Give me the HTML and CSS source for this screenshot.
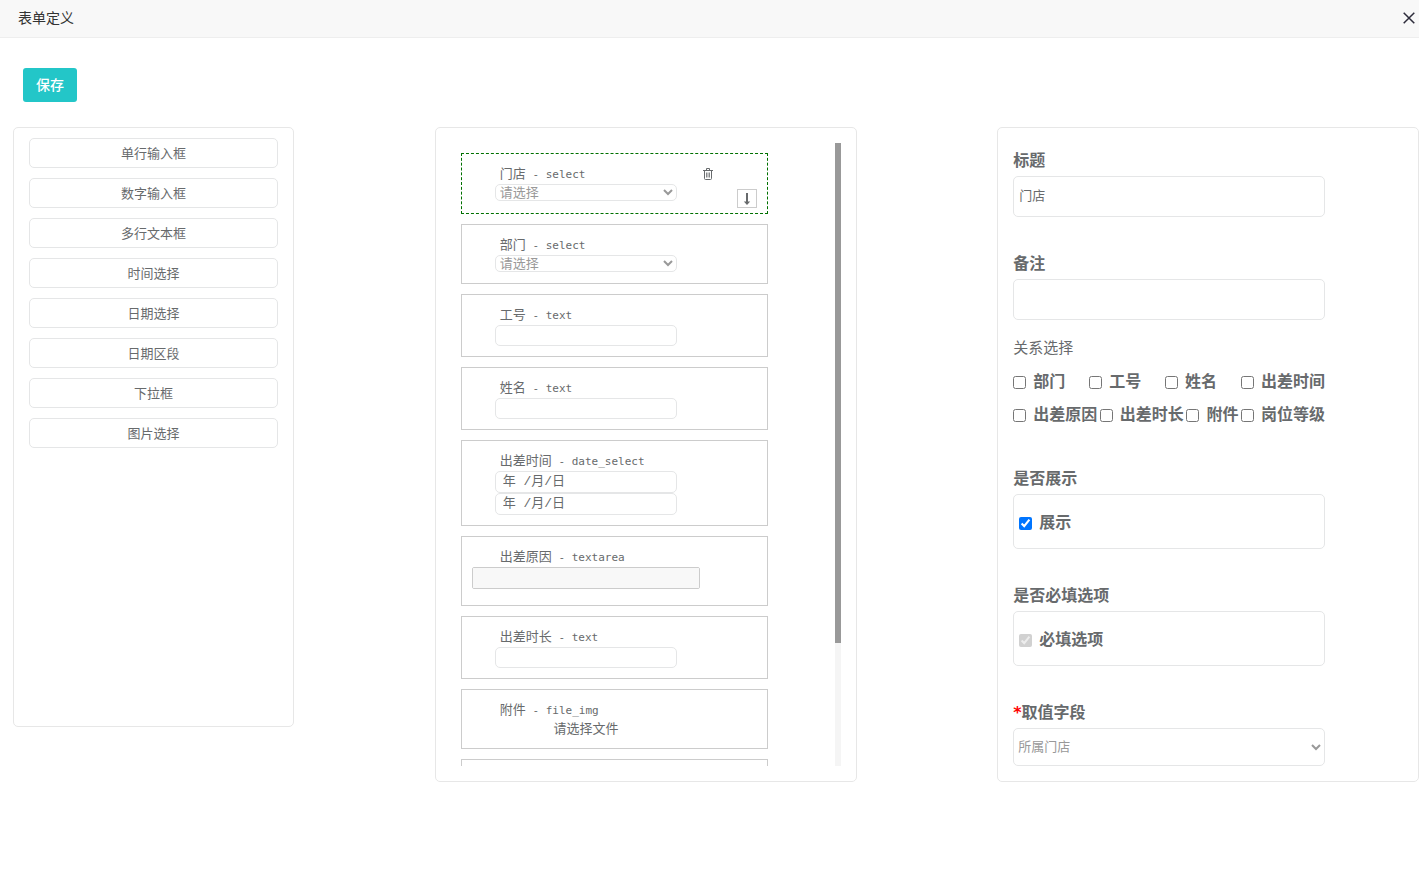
FILE: index.html
```html
<!DOCTYPE html>
<html lang="zh-CN">
<head>
<meta charset="utf-8">
<title>表单定义</title>
<link rel="stylesheet" href="styles.css">
</head>
<body>
<header class="titlebar">
  <h1 class="titlebar-text">表单定义</h1>
  <button class="icon-btn" type="button" aria-label="关闭">
    <svg width="12" height="12" viewBox="0 0 12 12" fill="none" stroke="#2d2c3b" stroke-width="1.5"><path d="M.7.7l10.6 10.6M11.3.7L.7 11.3"/></svg>
  </button>
</header>
<div class="toolbar"><button class="save" type="button">保存</button></div>
<main class="columns">
  <section class="panel palette">
    <button class="palette-item" type="button">单行输入框</button>
    <button class="palette-item" type="button">数字输入框</button>
    <button class="palette-item" type="button">多行文本框</button>
    <button class="palette-item" type="button">时间选择</button>
    <button class="palette-item" type="button">日期选择</button>
    <button class="palette-item" type="button">日期区段</button>
    <button class="palette-item" type="button">下拉框</button>
    <button class="palette-item" type="button">图片选择</button>
  </section>

  <section class="panel canvas">
    <div class="cards">
      <div class="card active">
        <div class="card-body">
          <label class="card-label" for="shop">门店<span class="type"> - select</span></label>
          <select class="control pick" id="shop"><option>请选择</option></select>
        </div>
        <div class="tools">
          <button class="icon-btn trash" type="button" aria-label="删除">
            <svg width="10" height="12" viewBox="0 0 10 12" fill="none" stroke="#676a6c"><path d="M0 2.500h10M3.500 2V.5h3V2M1.500 3v7.500q0 1 1 1h5q1 0 1-1V3"/><path d="M3.500 4.500v5M5 4.500v5M6.500 4.500v5" stroke-width=".8"/></svg>
          </button>
          <button class="icon-btn down" type="button" aria-label="下移">
            <svg width="8" height="12" viewBox="0 0 8 12"><path d="M3 0h2v8.500h2.200L4 12 .8 8.500H3z" fill="#676a6c"/></svg>
          </button>
        </div>
      </div>
      <div class="card"><div class="card-body">
        <label class="card-label" for="dept">部门<span class="type"> - select</span></label>
        <select class="control pick" id="dept"><option>请选择</option></select>
      </div></div>
      <div class="card"><div class="card-body">
        <label class="card-label" for="no">工号<span class="type"> - text</span></label>
        <input class="control" id="no" type="text">
      </div></div>
      <div class="card"><div class="card-body">
        <label class="card-label" for="name">姓名<span class="type"> - text</span></label>
        <input class="control" id="name" type="text">
      </div></div>
      <div class="card"><div class="card-body">
        <label class="card-label" for="from">出差时间<span class="type"> - date_select</span></label>
        <input class="control date" id="from" type="text" value="年 /月/日">
        <input class="control date" type="text" value="年 /月/日" aria-label="结束日期">
      </div></div>
      <div class="card"><div class="card-body">
        <label class="card-label" for="reason">出差原因<span class="type"> - textarea</span></label>
        <textarea class="area" id="reason" rows="1"></textarea>
      </div></div>
      <div class="card"><div class="card-body">
        <label class="card-label" for="length">出差时长<span class="type"> - text</span></label>
        <input class="control" id="length" type="text">
      </div></div>
      <div class="card"><div class="card-body">
        <span class="card-label">附件<span class="type"> - file_img</span></span>
        <button class="file" type="button">请选择文件</button>
      </div></div>
      <div class="card"></div>
    </div>
    <div class="track"><div class="thumb"></div></div>
  </section>

  <section class="panel props">
    <div class="fields">
      <label class="heading" for="title">标题</label>
      <input class="box text" id="title" type="text" value="门店">
      <label class="heading" for="note">备注</label>
      <input class="box text" id="note" type="text">
      <fieldset class="relations">
        <legend class="legend">关系选择</legend>
        <div class="checks">
          <label class="check"><input type="checkbox">部门</label>
          <label class="check"><input type="checkbox">工号</label>
          <label class="check"><input type="checkbox">姓名</label>
          <label class="check"><input type="checkbox">出差时间</label>
        </div>
        <div class="checks">
          <label class="check"><input type="checkbox">出差原因</label>
          <label class="check"><input type="checkbox">出差时长</label>
          <label class="check"><input type="checkbox">附件</label>
          <label class="check"><input type="checkbox">岗位等级</label>
        </div>
      </fieldset>
      <div class="heading">是否展示</div>
      <div class="box flag"><label class="check"><input type="checkbox" checked>展示</label></div>
      <div class="heading">是否必填选项</div>
      <div class="box flag"><label class="check"><input type="checkbox" checked disabled>必填选项</label></div>
      <label class="heading" for="source"><span class="star">*</span>取值字段</label>
      <select class="box source" id="source"><option>所属门店</option></select>
    </div>
  </section>
</main>
</body>
</html>
```
FILE: styles.css
```css
* { box-sizing: border-box; }
body {
  margin: 0;
  background: #fff;
  color: #676a6c;
  font: 13px/20px "Noto Sans CJK SC", sans-serif;
}
button, input, select, textarea { font: inherit; color: inherit; margin: 0; }
.titlebar {
  display: flex;
  align-items: center;
  justify-content: space-between;
  height: 38px;
  padding: 0 4px 2px 18px;
  background: #f8f8f8;
  border-bottom: 1px solid #eee;
}
.titlebar-text {
  margin: 0;
  font-family: "Liberation Sans", "Noto Sans CJK SC", sans-serif;
  font-size: 14px;
  font-weight: 400;
  color: #333;
}
.icon-btn {
  display: flex;
  align-items: center;
  justify-content: center;
  padding: 0;
  border: 0;
  background: none;
}
.toolbar { padding: 30px 23px 25px; }
.save {
  display: block;
  height: 34px;
  padding: 0 13px 2px;
  border: 0;
  border-radius: 3px;
  background: #23c6c8;
  color: #fff;
  font-size: 14px;
  font-weight: 500;
}
.columns {
  display: grid;
  grid-template-columns: 20% 30% 30%;
  justify-content: space-between;
  align-items: start;
  padding-left: 13px;
}
.panel { border: 1px solid #e7e7e7; border-radius: 5px; }
.palette {
  display: flex;
  flex-direction: column;
  gap: 10px;
  min-height: 600px;
  padding: 10px 15px;
}
.palette-item {
  height: 30px;
  padding: 0;
  border: 1px solid #e5e6e7;
  border-radius: 5px;
  background: #fff;
}
.canvas { display: flex; justify-content: space-between; padding: 15px; }
.cards {
  display: flex;
  flex-direction: column;
  gap: 10px;
  width: 85%;
  height: 623px;
  padding: 10px 14px 0 10px;
  overflow: hidden;
}
.card {
  display: flex;
  flex: none;
  padding: 10px;
  border: 1px solid #ccc;
}
.active { padding-bottom: 5px; border: 1px dashed #007000; }
.card-body { display: flex; flex-direction: column; align-items: center; width: 80%; }
.card-label {
  align-self: stretch;
  height: 20px;
  padding-left: 28px;
  line-height: 18px;
  white-space: nowrap;
}
.type { font-family: "DejaVu Sans Mono", monospace; font-size: 11px; white-space: pre; }
.control {
  width: 80%;
  height: 21px;
  padding: 0 7px;
  border: 1px solid #e5e6e7;
  border-radius: 5px;
  background: #fff;
}
.date, .pick, .source { font-family: "Liberation Mono", "Noto Sans CJK SC", monospace; }
.date { height: 22px; padding-bottom: 5px; }
.pick { height: 17px; padding: 0; margin-bottom: 1px; line-height: 15px; color: #999; }
.area {
  width: 100%;
  height: 22px;
  margin-bottom: 6px;
  border: 1px solid #ccc;
  border-radius: 2px;
  background: #f8f8f8;
  resize: none;
}
.file { height: 18px; padding: 0 0 2px; border: 0; background: none; line-height: 16px; }
.tools { display: flex; flex: 1; justify-content: space-between; height: 44px; }
.trash { align-self: flex-start; padding: 4px 3px; }
.down { align-self: flex-end; width: 20px; height: 19px; border: 1px solid #ccc; }
.track { width: 6px; background: #f5f5f5; }
.thumb { height: 500px; background: #999; }
.props { padding: 21px 15px 15px; }
.fields { display: flex; flex-direction: column; width: 80%; }
.heading { height: 22px; margin-bottom: 5px; font-size: 16px; line-height: 20px; font-weight: 700; }
.star { color: #f00; font-family: "DejaVu Sans", sans-serif; }
.box {
  width: 100%;
  margin-bottom: 35px;
  border: 1px solid #e5e6e7;
  border-radius: 5px;
  background: #fff;
}
.text { height: 41px; padding: 0 5px 4px; }
.relations { min-width: 0; margin: -18px 0 42px; padding: 0; border: 0; }
.legend { padding: 0 0 2px; font-size: 15px; line-height: 20px; }
.checks { display: flex; justify-content: space-between; margin-top: 11px; }
.check {
  display: flex;
  align-items: flex-start;
  gap: 7px;
  height: 22px;
  font-size: 16px;
  line-height: 20px;
  font-weight: 700;
  white-space: nowrap;
}
.check input { width: 13px; height: 13px; margin-top: 6px; }
.flag { display: flex; align-items: center; height: 55px; padding: 0 5px; }
.source { height: 38px; margin-bottom: 0; padding: 0; color: #999; }
```
